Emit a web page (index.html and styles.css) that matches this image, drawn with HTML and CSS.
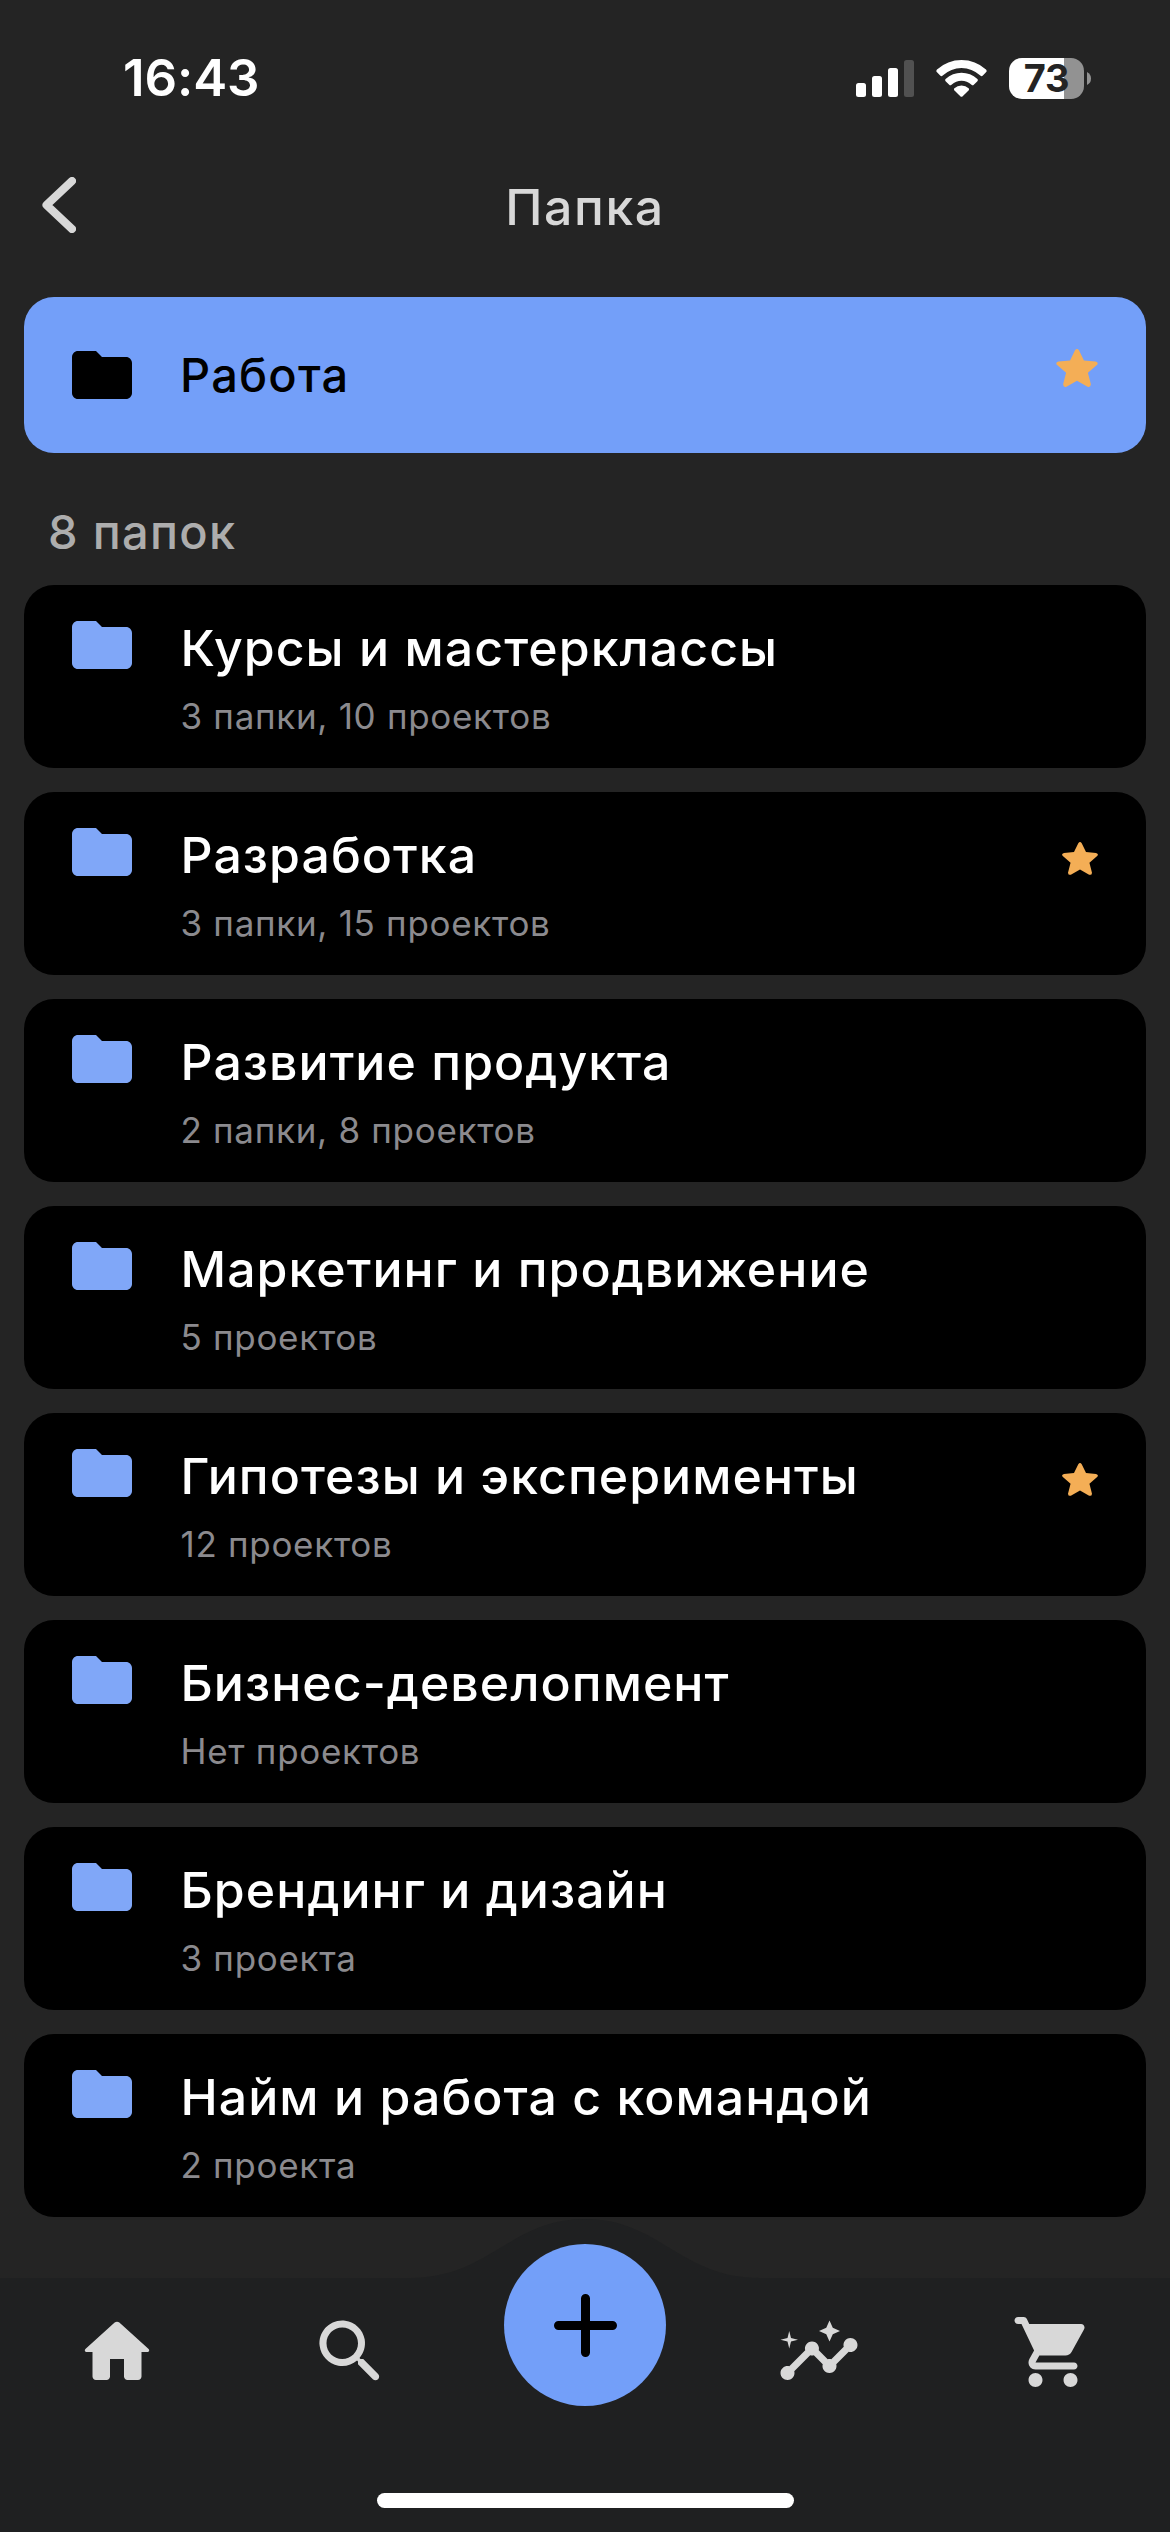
FILE: index.html
```html
<!DOCTYPE html>
<html lang="ru">
<head>
<meta charset="utf-8">
<title>Папка</title>
<link rel="stylesheet" href="styles.css">
</head>
<body>
<svg class="defs" width="0" height="0">
  <symbol id="folder" viewBox="2 4 20 16"><path d="M10 4H4c-1.1 0-1.99.9-1.99 2L2 18c0 1.1.9 2 2 2h16c1.1 0 2-.9 2-2V8c0-1.1-.9-2-2-2h-8l-2-2z"/></symbol>
  <symbol id="star" viewBox="0 0 126 115"><path d="M57 4Q63-4 69 4L84 35 119 38Q129 41 124 48L96 72 105 107Q104 117 95 114L63 96 31 114Q22 117 21 107L30 72 2 48Q-3 41 7 38L42 35Z"/></symbol>
</svg>
<div class="screen">
  <header class="status">
    <span class="time">16:43</span>
    <div class="indicators">
      <svg class="signal" viewBox="0 0 58 37"><rect x="0" y="23" width="10" height="14" rx="2.5"/><rect x="16" y="16" width="10" height="21" rx="2.5"/><rect x="32" y="8" width="10" height="29" rx="2.5"/><rect class="weak" x="48" y="0" width="10" height="37" rx="2.5"/></svg>
      <svg class="wifi" viewBox="0 0 51 37"><path d="M1 9.5Q11.500 0 25.500 0T50 9.500Q51.300 11 50 12.300L46.600 15.700Q45.500 16.700 44.300 15.600 36 8 25.500 8T6.700 15.600Q5.500 16.700 4.400 15.700L1 12.300Q-.3 11 1 9.500Z"/><path d="M9.600 19Q16.500 12.700 25.500 12.700T41.400 19Q42.500 20 41.400 21.200L37.800 24.800Q36.700 25.800 35.500 24.800 31 20.800 25.500 20.800T15.500 24.800Q14.300 25.800 13.200 24.800L9.600 21.200Q8.500 20 9.600 19Z"/><path d="M18.400 28.200Q21.300 25.500 25.500 25.500T32.600 28.200Q33.600 29.300 32.500 30.500L26.700 36.300Q25.500 37.400 24.300 36.300L18.500 30.500Q17.400 29.300 18.400 28.200Z"/></svg>
      <div class="battery"><span class="level">73</span><svg class="nub" viewBox="0 0 4 13"><path d="M0 0Q4 2 4 6.500T0 13Z"/></svg></div>
    </div>
  </header>
  <div class="titlebar">
    <svg class="back" viewBox="0 0 34 56"><path d="M30 4 4.500 28 30 52"/></svg>
    <h1 class="title">Папка</h1>
  </div>
  <main class="content">
    <section class="current">
      <svg class="folder"><use href="#folder"/></svg>
      <span class="current-name">Работа</span>
      <svg class="star star-large"><use href="#star"/></svg>
    </section>
    <h2 class="count">8 папок</h2>
    <ul class="list">
      <li class="card"><svg class="folder"><use href="#folder"/></svg><div class="text"><div class="name">Курсы и мастерклассы</div><div class="meta">3 папки, 10 проектов</div></div></li>
      <li class="card"><svg class="folder"><use href="#folder"/></svg><div class="text"><div class="name">Разработка</div><div class="meta">3 папки, 15 проектов</div></div><svg class="star"><use href="#star"/></svg></li>
      <li class="card"><svg class="folder"><use href="#folder"/></svg><div class="text"><div class="name">Развитие продукта</div><div class="meta">2 папки, 8 проектов</div></div></li>
      <li class="card"><svg class="folder"><use href="#folder"/></svg><div class="text"><div class="name">Маркетинг и продвижение</div><div class="meta">5 проектов</div></div></li>
      <li class="card"><svg class="folder"><use href="#folder"/></svg><div class="text"><div class="name">Гипотезы и эксперименты</div><div class="meta">12 проектов</div></div><svg class="star"><use href="#star"/></svg></li>
      <li class="card"><svg class="folder"><use href="#folder"/></svg><div class="text"><div class="name">Бизнес-девелопмент</div><div class="meta">Нет проектов</div></div></li>
      <li class="card"><svg class="folder"><use href="#folder"/></svg><div class="text"><div class="name">Брендинг и дизайн</div><div class="meta">3 проекта</div></div></li>
      <li class="card"><svg class="folder"><use href="#folder"/></svg><div class="text"><div class="name">Найм и работа с командой</div><div class="meta">2 проекта</div></div></li>
    </ul>
  </main>
  <nav class="nav">
    <svg class="nav-shape" viewBox="0 0 1170 315"><path d="M0 61H410C490 61 510 2 585 2S680 61 760 61H1170V315H0Z"/></svg>
    <div class="tabs">
      <svg class="tab" viewBox="0 0 24 24"><path d="M10 19v-5h4v5c0 .55.45 1 1 1h3c.55 0 1-.45 1-1v-7h1.700c.46 0 .68-.57.33-.87L12.670 3.600c-.38-.34-.96-.34-1.340 0l-8.360 7.530c-.34.3-.13.87.33.87H5v7c0 .55.45 1 1 1h3c.55 0 1-.45 1-1z"/></svg>
      <svg class="tab" viewBox="0 0 24 24"><path d="M15.500 14h-.79l-.28-.27c1.200-1.400 1.820-3.310 1.480-5.340-.47-2.780-2.790-5-5.590-5.340-4.230-.52-7.790 3.040-7.270 7.270.34 2.800 2.560 5.120 5.340 5.590 2.030.34 3.940-.28 5.340-1.480l.27.28v.79l4.250 4.250c.41.41 1.080.41 1.490 0 .41-.41.41-1.080 0-1.490L15.500 14zm-6 0C7.010 14 5 11.990 5 9.500S7.010 5 9.500 5 14 7.010 14 9.500 11.990 14 9.500 14z"/></svg>
      <div class="add"><svg class="plus" viewBox="0 0 63 63"><path d="M31.500 4.500V58.500M4.500 31.500H58.500"/></svg></div>
      <svg class="tab" viewBox="0 0 24 24"><path d="M21,8c-1.450,0-2.260,1.440-1.930,2.510l-3.550,3.560c-0.300-0.090-0.740-0.090-1.040,0l-2.550-2.550C12.270,10.450,11.460,9,10,9c-1.450,0-2.270,1.440-1.930,2.520l-4.560,4.550C2.440,15.740,1,16.550,1,18c0,1.100,0.900,2,2,2c1.450,0,2.260-1.440,1.930-2.510l4.550-4.560c0.300,0.090,0.740,0.090,1.040,0l2.550,2.550C12.730,16.550,13.540,18,15,18c1.450,0,2.270-1.440,1.930-2.520l3.560-3.550C21.560,12.260,23,11.450,23,10C23,8.900,22.100,8,21,8z"/><path d="M15 9 15.940 6.930 18 6 15.940 5.070 15 3 14.080 5.070 12 6 14.080 6.930ZM3.500 11 4 9 6 8.500 4 8 3.500 6 3 8 1 8.500 3 9Z"/></svg>
      <svg class="tab" viewBox="0 0 24 24"><path d="M7 18c-1.100 0-1.990.9-1.990 2S5.900 22 7 22s2-.9 2-2-.9-2-2-2zM1 3c0 .55.45 1 1 1h1l3.600 7.590-1.350 2.440C4.520 15.370 5.480 17 7 17h11c.55 0 1-.45 1-1s-.45-1-1-1H7l1.100-2h7.450c.75 0 1.410-.41 1.750-1.030l3.580-6.490c.37-.66-.11-1.480-.87-1.480H5.210l-.67-1.430c-.16-.35-.52-.57-.9-.57H2c-.55 0-1 .45-1 1zm16 15c-1.100 0-1.990.9-1.990 2s.89 2 1.990 2 2-.9 2-2-.9-2-2-2z"/></svg>
    </div>
    <div class="home-indicator"></div>
  </nav>
</div>
</body>
</html>
```
FILE: styles.css
```css
* { box-sizing: border-box; margin: 0; padding: 0; }
body { background: #242424; font-family: Inter, "Liberation Sans", sans-serif; color: #fff; }
svg { display: block; flex: none; }
.defs { position: absolute; }
.screen { width: 1170px; height: 2532px; display: flex; flex-direction: column; overflow: hidden; background: #242424; }

.status { height: 156px; padding: 0 79px 0 123px; display: flex; justify-content: space-between; align-items: center; flex: none; }
.time { font-size: 51px; font-weight: 600; line-height: 60px; letter-spacing: -0.1px; }
.indicators { display: flex; align-items: center; }
.signal { width: 58px; height: 37px; margin-right: 22px; fill: #fff; }
.weak { fill: #515151; }
.wifi { width: 51px; height: 37px; margin-right: 22px; fill: #fff; }
.battery { display: flex; align-items: center; gap: 3px; height: 41px; }
.level { width: 75px; height: 41px; border-radius: 13px; background: linear-gradient(90deg, #fff 55px, #929292 55px); color: #242424; font-size: 38px; font-weight: 700; line-height: 41px; text-align: center; letter-spacing: -0.3px; }
.nub { width: 4px; height: 13px; fill: #929292; }

.titlebar { height: 141px; flex: none; display: grid; grid-template-columns: 100px 1fr 100px; padding: 21px 0 0 0; }
.back { width: 34px; height: 56px; margin-left: 42px; fill: none; stroke: #d8d8d8; stroke-width: 8; stroke-linecap: round; stroke-linejoin: round; }
.title { font-size: 50px; font-weight: 500; line-height: 60px; color: #d8d8d8; letter-spacing: 1.6px; text-align: center; }

.content { flex: 1; padding: 0 24px; }
.current { height: 156px; border-radius: 30px; background: #739ff9; padding: 0 48px; display: flex; align-items: center; color: #000; }
.folder { width: 60px; height: 48px; margin-right: 48px; fill: currentColor; }
.current-name { flex: 1; font-size: 47px; font-weight: 550; line-height: 60px; letter-spacing: 1.2px; }
.star { width: 36px; height: 33px; fill: #f4ae56; }
.star-large { width: 42px; height: 38px; margin-bottom: 14px; }
.count { font-size: 47px; font-weight: 550; line-height: 60px; letter-spacing: 1.3px; color: #adadad; padding-left: 24px; margin: 49px 0 23px; }
.list { list-style: none; display: flex; flex-direction: column; gap: 24px; }
.card { height: 183px; border-radius: 30px; background: #000; padding: 36px 48px 0; display: flex; align-items: flex-start; color: #80a7f8; }
.card .star { margin-top: 14px; }
.text { flex: 1; padding-left: 0.5px; }
.name { color: #fff; font-size: 50px; font-weight: 500; line-height: 60px; letter-spacing: 1.05px; margin-top: -3px; white-space: nowrap; }
.meta { color: #8b8a8e; font-size: 35px; line-height: 44px; letter-spacing: 0.7px; margin-top: 16px; }

.nav { height: 315px; flex: none; position: relative; display: flex; flex-direction: column; justify-content: space-between; align-items: center; padding-bottom: 24px; }
.nav-shape { position: absolute; left: 0; top: 0; width: 1170px; height: 315px; fill: #1f2021; }
.tabs { position: relative; width: 1170px; display: grid; grid-template-columns: repeat(5, 1fr); justify-items: center; padding-top: 27px; }
.tab { width: 84px; height: 84px; margin-top: 66px; fill: #d8d8d8; }
.add { width: 162px; height: 162px; border-radius: 50%; background: #739ff9; display: flex; align-items: center; justify-content: center; }
.plus { width: 63px; height: 63px; fill: none; stroke: #000; stroke-width: 9; stroke-linecap: round; }
.home-indicator { position: relative; width: 417px; height: 15px; border-radius: 8px; background: #fff; }
```
